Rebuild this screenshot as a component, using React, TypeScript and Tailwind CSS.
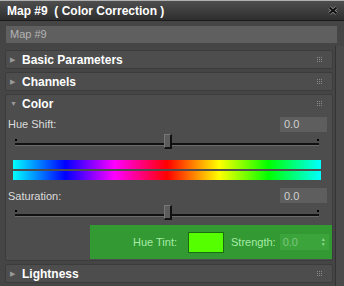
import React from "react";

function Dots() {
  return (
    <div className="grid grid-cols-3 gap-[1px]">
      {Array.from({ length: 9 }).map((_, i) => (
        <div key={i} className="w-[1px] h-[1px] bg-[#8a8a8a]" />
      ))}
    </div>
  );
}

function RolloutHeader({ title, open }: { title: string; open?: boolean }) {
  return (
    <div className="h-[17px] flex items-center pl-[4px] pr-[10px]">
      <span className="w-[8px] text-[7px] text-[#9a9a9a] leading-none">{open ? "▼" : "▶"}</span>
      <span className="ml-[4px] font-bold text-[12px] text-white flex-1">{title}</span>
      <Dots />
    </div>
  );
}

function Rollout({ title }: { title: string }) {
  return (
    <div className="bg-[#4d4d4d] border border-[#3c3c3c] rounded-[2px]">
      <RolloutHeader title={title} />
    </div>
  );
}

function Slider({ pos }: { pos: number }) {
  return (
    <div className="relative h-[16px] ml-[9px] mr-[13px]">
      <div className="absolute left-0 top-[5px] w-[2px] h-[2px] bg-black" />
      <div className="absolute right-0 top-[5px] w-[2px] h-[2px] bg-black" />
      <div className="absolute left-0 right-0 top-[9px] h-[2px] bg-[#111]" />
      <div className="absolute left-0 right-0 top-[11px] h-[1px] bg-[#6a6a6a]" />
      <div
        className="absolute top-0 w-[8px] h-[15px] bg-[#5c5c5c] border-r-2 border-b-2 border-[#111] border-l border-t border-l-[#777] border-t-[#777]"
        style={{ left: pos }}
      />
    </div>
  );
}

function ValueBox() {
  return (
    <div className="w-[47px] h-[15px] bg-[#5e5e5e] flex items-center pl-[4px] text-[11px] text-[#d0d0d0]">0.0</div>
  );
}

const spectrum =
  "bg-[linear-gradient(to_right,#00ffff_0%,#0000ff_17%,#ff00ff_33%,#ff0000_50%,#ffff00_67%,#00ff00_83%,#00ffff_100%)]";

export default function App() {
  return (
    <div className="w-[344px] h-[286px] bg-[#454545] overflow-hidden font-['Liberation_Sans',sans-serif] text-[11px]">
      <div className="h-[21px] flex items-center pl-[7px] pr-[6px] border-t border-t-[#b0b0b0] border-b border-b-[#1a1a1a] bg-[linear-gradient(to_bottom,#4e4e4e,#2e2e2e)]">
        <span className="flex-1 font-bold text-[12px] text-white whitespace-pre">Map #9  ( Color Correction )</span>
        <svg width="10" height="9" viewBox="0 0 10 9">
          <path d="M1.5 1.5 L8.5 7.5 M8.5 1.5 L1.5 7.5" stroke="#9a9a9a" strokeWidth="3.6" />
          <path d="M1.5 1.5 L8.5 7.5 M8.5 1.5 L1.5 7.5" stroke="#111" strokeWidth="2.2" />
        </svg>
      </div>
      <div className="pl-[6px] pr-[7px] pt-[5px] pb-[3px]">
        <div className="h-[17px] bg-[#5f5f5f] flex items-center pl-[4px] text-[11px] text-[#b4b4b4]">Map #9</div>
      </div>
      <div className="flex">
        <div className="flex-1 pl-[5px] pr-[2px] pt-[4px] flex flex-col gap-[3px]">
          <Rollout title="Basic Parameters" />
          <Rollout title="Channels" />
          <div className="bg-[#4d4d4d] border border-[#3c3c3c] rounded-[2px] flex flex-col">
            <RolloutHeader title="Color" open />
            <div className="flex items-center justify-between pl-[2px] pr-[5px] pt-[4px]">
              <span className="text-[#dcdcdc]">Hue Shift:</span>
              <ValueBox />
            </div>
            <div className="mt-[1px]">
              <Slider pos={149} />
            </div>
            <div className="mt-[10px] ml-[7px] mr-[11px] flex flex-col gap-[2px]">
              <div className={`h-[9px] ${spectrum}`} />
              <div className={`h-[9px] ${spectrum}`} />
            </div>
            <div className="flex items-center justify-between pl-[2px] pr-[5px] mt-[8px]">
              <span className="text-[#dcdcdc]">Saturation:</span>
              <ValueBox />
            </div>
            <div className="mt-[1px]">
              <Slider pos={149} />
            </div>
            <div className="ml-[84px] mt-[4px] h-[34px] bg-[#339933] flex items-center pl-[43px] whitespace-nowrap">
              <span className="text-[#a6eca6]">Hue Tint:</span>
              <div className="ml-[11px] w-[36px] h-[21px] bg-[#55ff00] border border-[#1b6b12]" />
              <span className="ml-[7px] text-[#a6eca6]">Strength:</span>
              <div className="ml-[4px] w-[49px] h-[16px] bg-[#3ba53b] flex items-center pl-[3px] pr-[3px] text-[#7cc67c]">
                <span className="flex-1">0.0</span>
                <span className="flex flex-col text-[5px] leading-[5px] text-[#8fd88f]">
                  <span>▲</span>
                  <span>▼</span>
                </span>
              </div>
            </div>
            <div className="h-[1px]" />
          </div>
          <Rollout title="Lightness" />
        </div>
        <div className="w-[9px] border-l border-[#333] bg-[#4a4a4a] h-[260px]" />
      </div>
    </div>
  );
}
